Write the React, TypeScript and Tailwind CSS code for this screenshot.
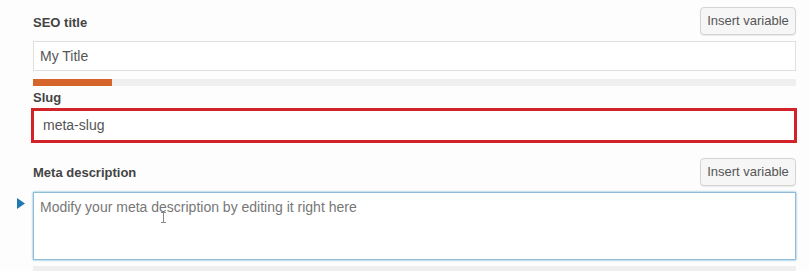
// SEO fields panel: title, slug, meta description

const FONT = { fontFamily: '"Liberation Sans", Arial, sans-serif' };

function InsertButton() {
  return (
    <button className="h-[28px] w-[96px] rounded-[4px] border border-[#d4d4d4] bg-[#f6f6f6] text-[13px] text-[#555] shadow-[0_1px_1px_rgba(0,0,0,0.08)]">
      Insert variable
    </button>
  );
}

export default function App() {
  return (
    <div className="h-[271px] w-[809px] overflow-hidden bg-[#fdfdfd]" style={FONT}>
      <div className="flex flex-col pl-[33px] pr-[13px] pt-[7px]">
        {/* SEO title */}
        <div className="flex h-[28px] items-center justify-between">
          <span className="pt-[4px] text-[13px] font-bold text-[#444]">SEO title</span>
          <InsertButton />
        </div>
        <div className="mt-[6px] flex h-[30px] items-center border border-[#e0e0e0] bg-white px-[6px] text-[14px] text-[#555]">
          My Title
        </div>
        <div className="mt-[8px] h-[7px] rounded-[1px] bg-[#efefef]">
          <div className="h-full w-[79px] bg-[#d6652c]" />
        </div>

        {/* Slug */}
        <span className="mt-[3px] h-[17px] text-[13px] font-bold leading-[17px] text-[#444]">Slug</span>
        <div className="-ml-[2px] -mr-[1px] mt-[2px] flex h-[35px] items-center border-[3px] border-[#d2232a] bg-white px-[9px] text-[14px] text-[#555]">
          meta-slug
        </div>

        {/* Meta description */}
        <div className="mt-[15px] flex h-[28px] items-center justify-between">
          <span className="pt-[2px] text-[13px] font-bold text-[#444]">Meta description</span>
          <InsertButton />
        </div>
        <div className="relative mt-[6px]">
          <svg className="absolute left-[-16px] top-[6px]" width="8" height="11" viewBox="0 0 8 11">
            <path d="M0 0 L8 5.5 L0 11 Z" fill="#1f7ab3" />
          </svg>
          <div className="h-[68px] border border-[#8fbcd9] bg-white px-[6px] pt-[4px] text-[14px] text-[#777] shadow-[0_0_2px_rgba(30,140,190,0.7)]">
            Modify your meta description by editing it right here
          </div>
          {/* text cursor */}
          <svg className="absolute left-[128px] top-[20px]" width="5" height="11" viewBox="0 0 5 11">
            <path d="M0 0.5 H5 M2.5 0.5 V10.5 M0 10.5 H5" stroke="#888" strokeWidth="1" fill="none" />
          </svg>
        </div>
        <div className="mt-[6px] h-[7px] bg-[#efefef]" />
      </div>
    </div>
  );
}
